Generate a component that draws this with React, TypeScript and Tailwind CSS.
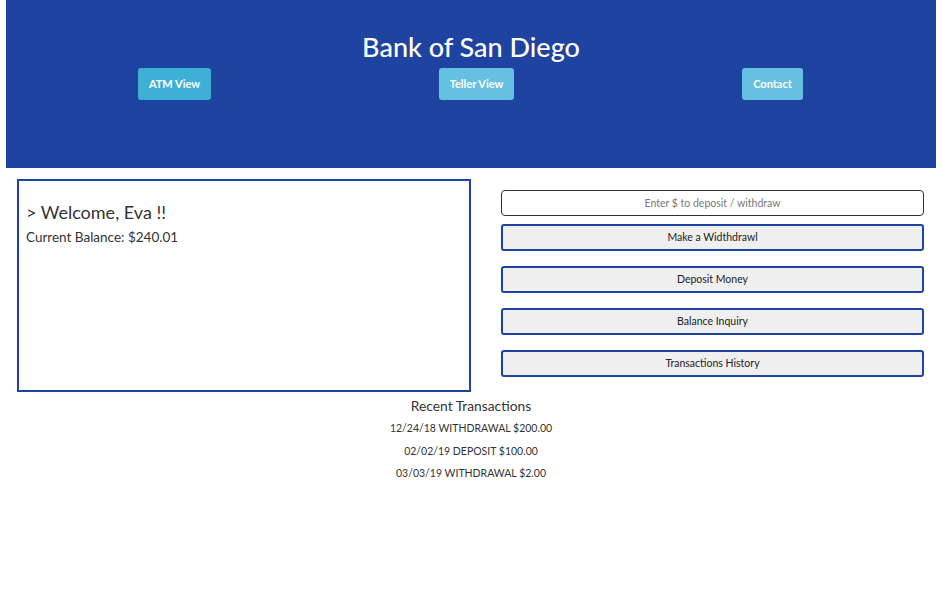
const transactions = [
  "12/24/18 WITHDRAWAL $200.00",
  "02/02/19 DEPOSIT $100.00",
  "03/03/19 WITHDRAWAL $2.00",
];

const actions = ["Make a Widthdrawl", "Deposit Money", "Balance Inquiry", "Transactions History"];

export default function App() {
  return (
    <div className="min-h-[609px] bg-white font-['Lato','Open_Sans',sans-serif] text-[#333]">
      <header className="ml-[6px] h-[168px] w-[930px] bg-[#1f43a0] pt-[30px]">
        <h1 className="text-center text-[27px] font-medium leading-[34px] text-white">Bank of San Diego</h1>
        <nav className="flex justify-around px-[18px] pt-[4px] pr-[19px]">
          <button className="h-[32px] w-[73px] rounded-[3px] bg-[#3eb0d6] text-[11px] font-bold text-white">
            ATM View
          </button>
          <button className="h-[32px] w-[75px] rounded-[3px] bg-[#65c0e1] text-[11px] font-bold text-white">
            Teller View
          </button>
          <button className="h-[32px] w-[61px] rounded-[3px] bg-[#65c0e1] text-[11px] font-bold text-white">
            Contact
          </button>
        </nav>
      </header>

      <main className="ml-[6px] flex w-[930px] pt-[11px]">
        <section className="ml-[11px] h-[213px] w-[454px] border-2 border-[#1f43a0] px-[7px] pt-[19px]">
          <h2 className="text-[18px] leading-[24px]">&gt; Welcome, Eva !!</h2>
          <p className="mt-[4px] text-[13.5px] leading-[18px]">Current Balance: $240.01</p>
        </section>

        <div className="ml-[30px] flex w-[423px] flex-col pt-[11px]">
          <input
            className="h-[26px] rounded-[4px] border border-[#333] text-center text-[10.5px] outline-none placeholder:text-[#777]"
            placeholder="Enter $ to deposit / withdraw"
          />
          <div className="mt-[8px] flex flex-col gap-[15px]">
            {actions.map((a) => (
              <button
                key={a}
                className="h-[27px] rounded-[3px] border-2 border-[#1f43a0] bg-[#efefef] text-[10.5px] text-[#222]"
              >
                {a}
              </button>
            ))}
          </div>
        </div>
      </main>

      <section className="ml-[6px] w-[930px] pt-[6px] text-center">
        <h3 className="text-[13.8px] leading-[16px]">Recent Transactions</h3>
        <ul className="mt-[7px] flex flex-col gap-[8.5px] text-[10.5px] leading-[14px]">
          {transactions.map((t) => (
            <li key={t}>{t}</li>
          ))}
        </ul>
      </section>
    </div>
  );
}
